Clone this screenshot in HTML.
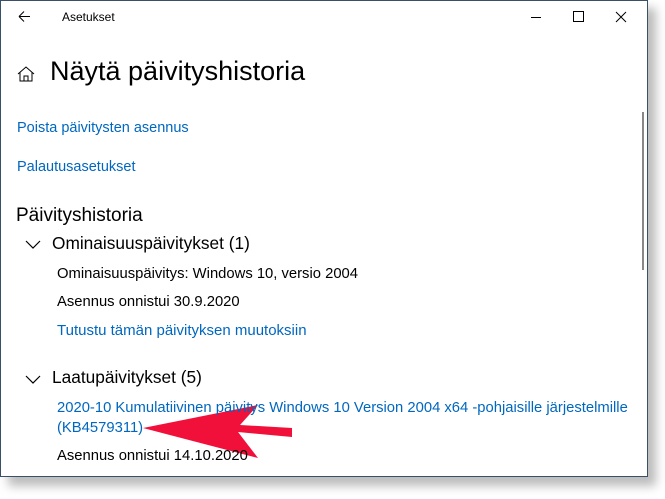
<!DOCTYPE html>
<html><head><meta charset="utf-8"><style>
body{margin:0;width:665px;height:499px;background:#fff;position:relative;overflow:hidden;font-family:"Liberation Sans",sans-serif;}
.shadow{position:absolute;left:8px;top:8px;width:648px;height:478px;background:#bbb;filter:blur(5px);}
.win{position:absolute;left:0;top:0;width:646px;height:475px;background:#fff;border:1px solid #3a5069;}
.t{position:absolute;white-space:nowrap;color:#000;}
.l{color:#0067c0;}
.sb{position:absolute;left:642px;top:112px;width:2px;height:158px;background:#888;}
</style></head><body>
<div class="shadow"></div>
<div class="win"></div>
<div class="sb"></div>
<svg style="position:absolute;left:0;top:0" width="665" height="499">
<path d="M19 16.5H30M19 16.5l5-5M19 16.5l5 5" stroke="#000" fill="none" stroke-width="1"/>
<path d="M531 17.5h10" stroke="#000"/>
<rect x="573.5" y="11.5" width="10" height="10" stroke="#000" fill="none"/>
<path d="M616 12l10 10M626 12l-10 10" stroke="#000"/>
<path d="M18 74l8-7 8 7M20 72v9h12v-9M24 81v-5h4v5" stroke="#000" fill="none"/>
<path d="M26 241l7 7 7-7M26 376l7 7 7-7" stroke="#000" fill="none" stroke-width="1.2"/>
<polygon points="143,428 258,405 240,425 292,428 292,437 238,432 258,458" fill="#f0103a"/>
</svg>
<div class="t" style="left:62px;top:10px;font-size:12px;">Asetukset</div>
<div class="t" style="left:50px;top:56px;font-size:27px;">Näytä päivityshistoria</div>
<div class="t l" style="left:17px;top:120px;font-size:14.5px;">Poista päivitysten asennus</div>
<div class="t l" style="left:17px;top:159px;font-size:14.5px;">Palautusasetukset</div>
<div class="t" style="left:16px;top:205px;font-size:19px;">Päivityshistoria</div>
<div class="t" style="left:52px;top:233px;font-size:17.3px;">Ominaisuuspäivitykset (1)</div>
<div class="t" style="left:57px;top:266px;font-size:14.8px;">Ominaisuuspäivitys: Windows 10, versio 2004</div>
<div class="t" style="left:57px;top:294px;font-size:14.8px;">Asennus onnistui 30.9.2020</div>
<div class="t l" style="left:57px;top:322px;font-size:15px;">Tutustu tämän päivityksen muutoksiin</div>
<div class="t" style="left:52px;top:367px;font-size:17.3px;">Laatupäivitykset (5)</div>
<div class="t l" style="left:57px;top:400px;font-size:14.8px;">2020-10 Kumulatiivinen päivitys Windows 10 Version 2004 x64 -pohjaisille järjestelmille</div>
<div class="t l" style="left:57px;top:420px;font-size:14.8px;">(KB4579311)</div>
<div class="t" style="left:57px;top:448px;font-size:14.8px;">Asennus onnistui 14.10.2020</div>
</body></html>
